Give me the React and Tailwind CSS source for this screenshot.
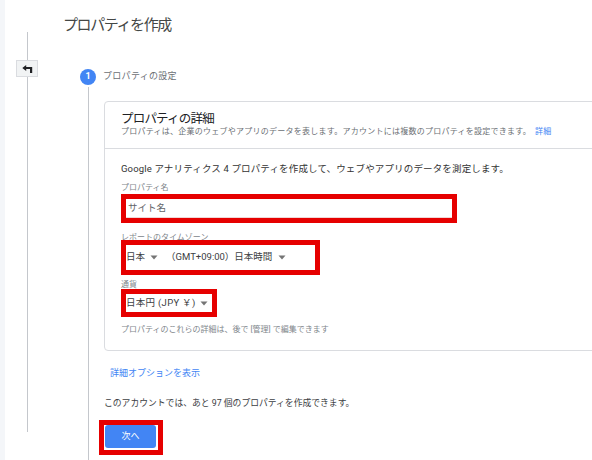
import React from "react";

const FONT = { fontFamily: 'Roboto, "Noto Sans CJK JP", "Noto Sans", sans-serif' };

function Caret() {
  return (
    <svg width="8" height="5" viewBox="0 0 8 5" className="shrink-0">
      <path d="M0.5 0.5 L7.5 0.5 L4 4.5 Z" fill="#757575" />
    </svg>
  );
}

function BackIcon() {
  return (
    <svg width="11" height="8" viewBox="0 0 11 8">
      <path d="M0.3 3 L4.2 0 L4.2 2 H10.2 V8 H8 V4 H4.2 V6 Z" fill="#202124" />
    </svg>
  );
}

export default function App() {
  return (
    <div className="flex w-[592px] h-[460px] overflow-hidden bg-white text-[#3c4043]" style={FONT}>
      <div className="w-[5px] shrink-0 bg-[#f4f6f9]" />
      {/* left rail */}
      <div className="w-[44px] shrink-0 flex flex-col items-center">
        <div className="h-[32px]" />
        <div className="h-[28px] w-px bg-[#c4c7cc]" />
        <div className="h-[17px] w-[22px] shrink-0 flex items-center justify-center bg-[#f1f3f4] border border-[#dadce0]">
          <BackIcon />
        </div>
        <div className="h-[355px] w-px bg-[#c4c7cc]" />
      </div>
      {/* main */}
      <div className="flex-1 flex flex-col min-w-0">
        <div className="ml-[14px] mt-[15px] h-[20px] text-[15px] leading-[20px] text-[#444746] tracking-[-1.4px]">
          プロパティを作成
        </div>
        <div className="ml-[31px] mt-[34px] flex items-center h-[16px]">
          <div className="w-[16px] h-[16px] rounded-full bg-[#4285f4] text-white text-[9px] font-bold flex items-center justify-center">
            1
          </div>
          <div className="ml-[7px] text-[9px] tracking-[0.3px] text-[#6b6f74]">プロパティの設定</div>
        </div>
        <div className="ml-[31px] mt-[2px] flex flex-1">
          <div className="w-[16px] shrink-0 flex justify-center">
            <div className="w-px h-full bg-[#c4c7cc]" />
          </div>
          <div className="ml-[8px] pt-[14px] flex flex-col">
            {/* card */}
            <div className="w-[540px] border border-[#dadce0] rounded-[4px]">
              <div className="pt-[9px] pb-[11px] px-[16px] border-b border-[#dadce0]">
                <div className="text-[12.5px] leading-[16px] text-[#202124] tracking-[-0.8px]">プロパティの詳細</div>
                <div className="text-[8px] leading-[10px] text-[#6b6f74] tracking-[0.25px]">
                  プロパティは、企業のウェブやアプリのデータを表します。アカウントには複数のプロパティを設定できます。
                  <span className="ml-[4px] text-[#4285f4]">詳細</span>
                </div>
              </div>
              <div className="pt-[13px] pb-[14px] px-[16px] flex flex-col items-start">
                <div className="text-[9.5px] leading-[14px] text-[#333] tracking-[0.15px]">
                  Google アナリティクス 4 プロパティを作成して、ウェブやアプリのデータを測定します。
                </div>
                <div className="mt-[6px] text-[8px] leading-[12px] text-[#80868b]">プロパティ名</div>
                <div className="w-[336px] h-[29px] border-[5px] border-[#e60000]">
                  <div className="h-full bg-white border-b border-[#f0d6d6] flex items-center pl-[2px] text-[9.5px] text-[#5f6368]">
                    サイト名
                  </div>
                </div>
                <div className="mt-[9px] text-[8px] leading-[12px] text-[#80868b]">レポートのタイムゾーン</div>
                <div className="relative mt-[-4px] w-[199px] h-[35px] border-[5px] border-[#e60000] flex items-center text-[9.5px] text-[#3c4043]">
                  <span>日本</span>
                  <span className="ml-[5px]"><Caret /></span>
                  <span className="ml-[8px]">（GMT+09:00）日本時間</span>
                  <span className="ml-[6px]"><Caret /></span>
                </div>
                <div className="mt-[4px] text-[8px] leading-[12px] text-[#80868b]">通貨</div>
                <div className="relative mt-[-2px] w-[96px] h-[28px] border-[5px] border-[#e60000] flex items-center text-[9.5px] text-[#3c4043]">
                  <span className="tracking-[0.3px]">日本円 (JPY ￥)</span>
                  <span className="ml-[4px]"><Caret /></span>
                </div>
                <div className="mt-[7px] text-[8px] leading-[12px] text-[#80868b]">
                  プロパティのこれらの詳細は、後で [管理] で編集できます
                </div>
              </div>
            </div>
            <div className="ml-[6px] mt-[16px] text-[9px] leading-[13px] text-[#4285f4]">詳細オプションを表示</div>
            <div className="mt-[17px] text-[8.8px] leading-[13px] text-[#3c4043]">
              このアカウントでは、あと 97 個のプロパティを作成できます。
            </div>
            <div className="ml-[-5px] mt-[10px] w-[64px] h-[35px] border-[5px] border-[#e60000] pl-px">
              <div className="w-[51px] h-[23px] rounded-[3px] bg-[#4285f4] text-white text-[9px] flex items-center justify-center">
                次へ
              </div>
            </div>
          </div>
        </div>
      </div>
    </div>
  );
}
